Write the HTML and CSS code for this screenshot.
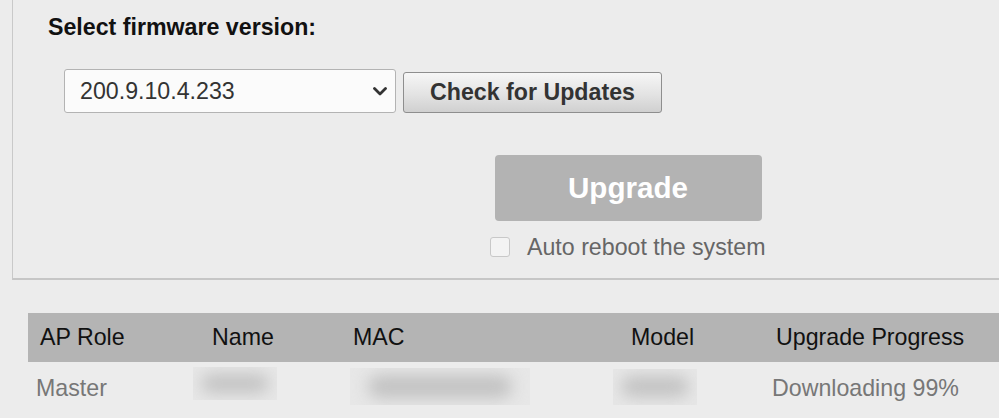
FILE: index.html
```html
<!DOCTYPE html>
<html lang="en">
<head>
<meta charset="utf-8">
<title>Firmware Upgrade</title>
<link rel="stylesheet" href="styles.css">
</head>
<body>
<div class="panel">
  <h2 class="title">Select firmware version:</h2>
  <div class="select-row">
    <div class="select">
      <span>200.9.10.4.233</span>
      <svg class="chevron" width="14" height="9" viewBox="0 0 14 9"><path d="M1.5 1.5 L7 7 L12.5 1.5" fill="none" stroke="#333" stroke-width="2.8" stroke-linecap="round" stroke-linejoin="round"/></svg>
    </div>
    <button class="btn-check">Check for Updates</button>
  </div>
  <div class="upgrade-group">
    <button class="btn-upgrade">Upgrade</button>
    <label class="check-row"><span class="checkbox"></span><span class="check-label">Auto reboot the system</span></label>
  </div>
</div>
<div class="table">
  <div class="th">AP Role</div>
  <div class="th">Name</div>
  <div class="th">MAC</div>
  <div class="th">Model</div>
  <div class="th">Upgrade Progress</div>
  <div class="td">Master</div>
  <div class="td"><div class="blob blob-name"><div class="blob-core"></div></div></div>
  <div class="td"><div class="blob blob-mac"><div class="blob-core"></div></div></div>
  <div class="td"><div class="blob blob-model"><div class="blob-core"></div></div></div>
  <div class="td">Downloading 99%</div>
</div>
</body>
</html>
```
FILE: styles.css
```css
html, body {
  margin: 0;
  padding: 0;
  overflow: hidden;
  background: #ececec;
  font-family: "Liberation Sans", Arial, Helvetica, sans-serif;
}
.panel {
  box-sizing: border-box;
  height: 280px;
  margin-left: 12px;
  margin-right: -20px;
  border-left: 1px solid #c9c9c9;
  border-bottom: 2px solid #c6c6c6;
  padding: 14px 0 0 35px;
}
.title {
  margin: 0;
  font-size: 23.2px;
  line-height: 26px;
  font-weight: bold;
  color: #111;
}
.select-row {
  display: flex;
  align-items: flex-end;
  gap: 7px;
  margin-top: 29px;
  margin-left: 16px;
}
.select {
  box-sizing: border-box;
  width: 332px;
  height: 44px;
  border: 1px solid #b3b3b3;
  border-radius: 3px;
  background: #fbfbfb;
  display: flex;
  align-items: center;
  justify-content: space-between;
  padding: 0 8px 0 15px;
  font-size: 23.2px;
  color: #333;
}
.chevron { display: block; }
.btn-check {
  box-sizing: border-box;
  width: 259px;
  height: 41px;
  padding: 0;
  border: 1px solid #8e8e8e;
  border-radius: 3px;
  background: linear-gradient(#f6f6f6, #e3e3e3 55%, #d0d0d0);
  font-family: inherit;
  font-size: 23.2px;
  font-weight: bold;
  color: #333;
}
.upgrade-group {
  width: 276px;
  margin-top: 42px;
  margin-left: 442px;
  display: flex;
  flex-direction: column;
  align-items: center;
}
.btn-upgrade {
  width: 267px;
  height: 66px;
  padding: 0;
  border: none;
  border-radius: 4px;
  background: #b3b3b3;
  color: #fff;
  font-family: inherit;
  font-size: 29.6px;
  font-weight: bold;
}
.check-row {
  align-self: stretch;
  display: flex;
  align-items: center;
  gap: 17px;
  margin-top: 16px;
  height: 20px;
}
.checkbox {
  box-sizing: border-box;
  width: 20px;
  height: 20px;
  border: 1px solid #c8c8c8;
  border-radius: 3px;
  background: #f3f3f3;
  flex: none;
}
.check-label {
  font-size: 23.2px;
  line-height: 26px;
  color: #666;
  white-space: nowrap;
}
.table {
  margin-top: 33px;
  margin-left: 28px;
  display: grid;
  grid-template-columns: 172px 141px 278px 145px 1fr;
  grid-template-rows: 49px 52px;
  font-size: 23.2px;
}
.th {
  background: #b4b4b4;
  color: #111;
  padding-left: 12px;
  display: flex;
  align-items: center;
  white-space: nowrap;
}
.td {
  color: #777;
  padding-left: 8px;
  display: flex;
  align-items: center;
  white-space: nowrap;
}
.blob {
  background: #e7e7e7;
  overflow: hidden;
  display: flex;
  align-items: center;
  justify-content: center;
}
.blob-core {
  width: 80%;
  height: 60%;
  background: #c2c2c2;
  border-radius: 14px;
  filter: blur(8px);
}
.blob-name { width: 84px; height: 33px; margin-left: -15px; margin-top: -9px; }
.blob-mac { width: 180px; height: 37px; margin-left: 1px; margin-top: -3px; }
.blob-model { width: 84px; height: 36px; margin-left: -14px; margin-top: -3px; }
```
